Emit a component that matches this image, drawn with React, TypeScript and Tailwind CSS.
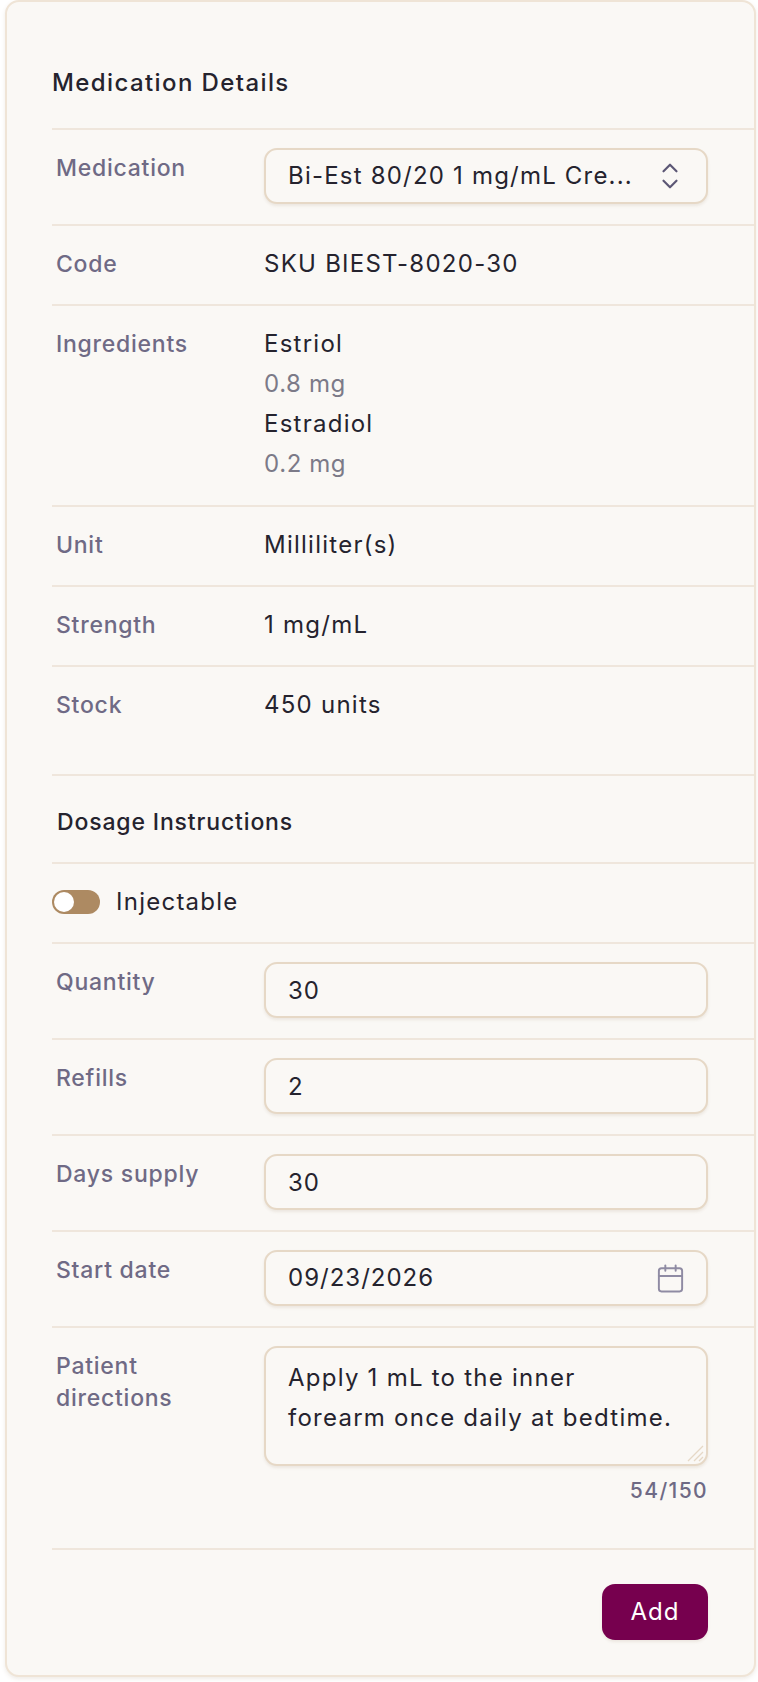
import { Calendar, ChevronDown, ChevronUp } from "lucide-react"

const fieldBox =
  "flex h-[56px] w-[444px] items-center rounded-[13px] border-2 border-[#e6d8c6] bg-[#faf8f5] pl-[22px] shadow-[0_2px_3px_rgba(120,90,50,0.1)]"

const labelText = "text-[23px] font-medium tracking-[0.75px] text-[#6f6a85]"

function Row({ label, children }: { label: string; children: React.ReactNode }) {
  return (
    <div className="flex border-b-2 border-[#efe6dc] pt-[18px] pb-[20px]">
      <div className={"w-[212px] shrink-0 pr-[40px] pl-[4px] leading-[40px] " + labelText}>{label}</div>
      <div className="min-w-0 flex-1">{children}</div>
    </div>
  )
}

function NumberField({ value }: { value: string }) {
  return (
    <input
      readOnly
      value={value}
      className={fieldBox + " text-[24px] tracking-[1px] text-[#25232e] outline-none"}
    />
  )
}

export default function App() {
  return (
    <div className="min-h-screen bg-white pr-[2px] pl-[5px] font-['Inter',sans-serif] text-[24px] leading-[40px] tracking-[1.25px] text-[#25232e]">
      <div className="rounded-[14px] border-2 border-[#efe4d6] bg-[#faf8f5] pt-[61px] pb-[35px] pl-[45px] shadow-[0_2px_4px_rgba(120,90,50,0.12)]">
        <h2 className="border-b-2 border-[#efe6dc] pb-[25px] text-[24px] leading-[40px] font-medium tracking-[1.4px]">
          Medication Details
        </h2>

        <Row label="Medication">
          <div className={fieldBox + " justify-between pr-[23px]"}>
            <span className="truncate tracking-[1.2px]">Bi-Est 80/20 1 mg/mL Cre...</span>
            <span className="flex shrink-0 flex-col items-center text-[#5c5775]">
              <ChevronUp size={26} strokeWidth={2} className="-mb-[10px]" />
              <ChevronDown size={26} strokeWidth={2} />
            </span>
          </div>
        </Row>
        <Row label="Code">
          <div>SKU BIEST-8020-30</div>
        </Row>
        <div className="flex border-b-2 border-[#efe6dc] pt-[18px] pb-[21px]">
          <div className={"w-[212px] shrink-0 pl-[4px] " + labelText}>Ingredients</div>
          <div>
            <div>Estriol</div>
            <div className="tracking-[0.6px] text-[#7c7a88]">0.8 mg</div>
            <div>Estradiol</div>
            <div className="tracking-[0.6px] text-[#7c7a88]">0.2 mg</div>
          </div>
        </div>
        <Row label="Unit">
          <div>Milliliter(s)</div>
        </Row>
        <Row label="Strength">
          <div>1 mg/mL</div>
        </Row>
        <div className="flex border-b-2 border-[#efe6dc] pt-[18px] pb-[49px]">
          <div className={"w-[212px] shrink-0 pl-[4px] " + labelText}>Stock</div>
          <div>450 units</div>
        </div>

        <h3 className="border-b-2 border-[#efe6dc] pt-[26px] pb-[20px] pl-[5px] text-[23px] leading-[40px] font-medium tracking-[0.85px]">
          Dosage Instructions
        </h3>

        <div className="flex items-center gap-[16px] border-b-2 border-[#efe6dc] pt-[18px] pb-[20px]">
          <span className="flex h-[24px] w-[48px] items-center rounded-full bg-[#ad8a62] pl-[2px]">
            <span className="size-[20px] rounded-full bg-white" />
          </span>
          <span>Injectable</span>
        </div>

        <Row label="Quantity">
          <NumberField value="30" />
        </Row>
        <Row label="Refills">
          <NumberField value="2" />
        </Row>
        <Row label="Days supply">
          <NumberField value="30" />
        </Row>
        <Row label="Start date">
          <div className={fieldBox + " justify-between pr-[20px]"}>
            <span className="tracking-[1px]">09/23/2026</span>
            <Calendar size={31} strokeWidth={1.5} className="text-[#8f8ba3]" />
          </div>
        </Row>
        <div className="flex border-b-2 border-[#efe6dc] pt-[18px] pb-[41px]">
          <div className={"w-[212px] shrink-0 pt-[4px] pr-[40px] pl-[4px] leading-[32px] " + labelText}>
            Patient directions
          </div>
          <div>
            <div className="relative">
              <textarea
                readOnly
                value="Apply 1 mL to the inner forearm once daily at bedtime."
                className="block h-[120px] w-[444px] resize-none rounded-[13px] border-2 border-[#e6d8c6] bg-[#faf8f5] py-[10px] pr-[33px] pl-[22px] text-[24px] leading-[40px] tracking-[1.25px] text-[#25232e] shadow-[0_2px_3px_rgba(120,90,50,0.1)] outline-none"
              />
              <svg className="absolute right-[4px] bottom-[4px] size-[17px] text-[#e6d8c6]" viewBox="0 0 17 17" stroke="currentColor" strokeWidth="1.3">
                <path d="M1 16 16 1M7 16l9-9M12 16l4-4" />
              </svg>
            </div>
            <div className="mt-[9px] w-[444px] text-right text-[21px] leading-[32px] font-medium tracking-[1.4px] text-[#6f6a85]">
              54/150
            </div>
          </div>
        </div>

        <div className="flex pt-[34px] pl-[550px]">
          <button className="h-[56px] w-[106px] rounded-[13px] bg-[#76004e] text-[24px] tracking-[1px] text-white shadow-[0_2px_3px_rgba(120,90,50,0.1)]">
            Add
          </button>
        </div>
      </div>
    </div>
  )
}
